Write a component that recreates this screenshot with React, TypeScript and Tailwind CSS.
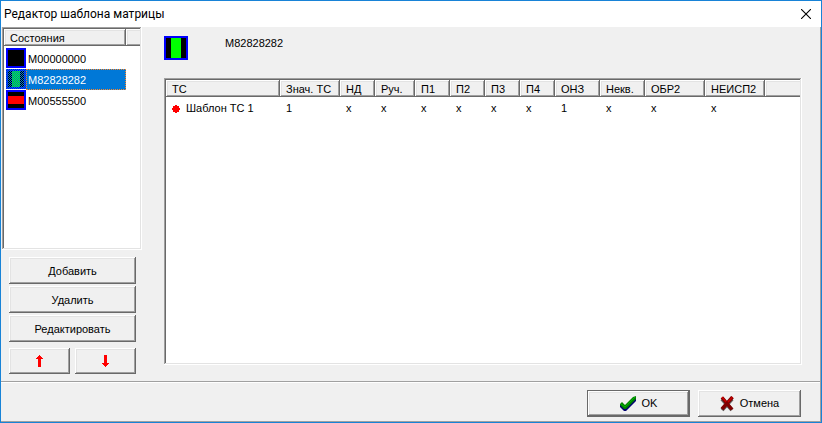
import React from "react";

const raised =
  "shadow-[inset_-1px_-1px_#696969,inset_1px_1px_#fff,inset_-2px_-2px_#a0a0a0,inset_2px_2px_#e3e3e3]";
const raisedOpen =
  "shadow-[inset_0_-1px_#696969,inset_1px_1px_#fff,inset_0_-2px_#a0a0a0,inset_2px_2px_#e3e3e3]";
const sunken =
  "p-[2px] bg-white shadow-[inset_-1px_-1px_#fff,inset_1px_1px_#a0a0a0,inset_-2px_-2px_#e3e3e3,inset_2px_2px_#696969]";

const states = [
  { name: "M00000000", kind: "black" },
  { name: "M82828282", kind: "green", selected: true },
  { name: "M00555500", kind: "red" },
];

const columns = [
  { title: "ТС", value: "Шаблон ТС 1", width: "w-[114px]" },
  { title: "Знач. ТС", value: "1", width: "w-[60px]" },
  { title: "НД", value: "x", width: "w-[35px]" },
  { title: "Руч.", value: "x", width: "w-[40px]" },
  { title: "П1", value: "x", width: "w-[35px]" },
  { title: "П2", value: "x", width: "w-[35px]" },
  { title: "П3", value: "x", width: "w-[35px]" },
  { title: "П4", value: "x", width: "w-[35px]" },
  { title: "ОНЗ", value: "1", width: "w-[45px]" },
  { title: "Некв.", value: "x", width: "w-[45px]" },
  { title: "ОБР2", value: "x", width: "w-[60px]" },
  { title: "НЕИСП2", value: "x", width: "w-[60px]" },
  { title: "", value: "", width: "" },
];

function StateIcon({ kind, selected }: { kind: string; selected?: boolean }) {
  return (
    <svg className="size-5 shrink-0" viewBox="0 0 20 20" shapeRendering="crispEdges" aria-hidden="true">
      <rect width="20" height="20" fill="#00f" />
      <rect x="2" y="2" width="16" height="16" fill="#000" />
      {kind === "green" && <rect x="6" y="2" width="8" height="16" fill="#0f0" />}
      {kind === "red" && <rect x="2" y="6" width="16" height="8" fill="#f00" />}
      {selected && (
        <>
          <pattern id="dither" width="2" height="2" patternUnits="userSpaceOnUse">
            <rect width="1" height="1" fill="#0078d7" />
            <rect x="1" y="1" width="1" height="1" fill="#0078d7" />
          </pattern>
          <rect width="20" height="20" fill="url(#dither)" />
        </>
      )}
    </svg>
  );
}

function Arrow({ down }: { down?: boolean }) {
  return (
    <svg className="h-3 w-[7px]" viewBox="0 0 7 12" shapeRendering="crispEdges" fill="#f00" aria-hidden="true">
      {down ? (
        <path d="M2 0h3v8h2v1h-1v1h-1v1h-1v1h-1v-1h-1v-1h-1v-1h-1v-1h2z" />
      ) : (
        <path d="M3 0h1v1h1v1h1v1h1v1h-2v8h-3v-8h-2v-1h1v-1h1v-1h1z" />
      )}
    </svg>
  );
}

function PushButton({ children, label, className = "" }: { children: React.ReactNode; label?: string; className?: string }) {
  return (
    <button aria-label={label} className={`flex items-center justify-center bg-[#f0f0f0] ${raised} ${className}`}>
      {children}
    </button>
  );
}

export default function App() {
  return (
    <div className="flex min-h-screen flex-col border border-[#1883d7] bg-[#f0f0f0] font-['Liberation_Sans',Arial,sans-serif] text-[11px] leading-[13px] text-black">
      <header className="flex h-[26px] items-center justify-between bg-white pr-[6px] pl-[3px]">
        <h1 className="font-[Roboto,'Open_Sans',sans-serif] text-[12px] leading-4">Редактор шаблона матрицы</h1>
        <button aria-label="Закрыть" className="p-1">
          <svg className="size-[10px]" viewBox="0 0 10 10" stroke="#000" strokeWidth="1.1" aria-hidden="true">
            <path d="M0 0L10 10M10 0L0 10" />
          </svg>
        </button>
      </header>

      <div className="flex grow flex-col border-r border-b border-[#a0a0a0]">
        <main className="flex grow pr-[18px] pb-[7px] pl-px">
          <section className="flex w-[140px] shrink-0 flex-col">
            <div className={`h-[223px] ${sunken}`}>
              <div className="flex h-[17px] bg-[#f0f0f0]">
                <div className={`flex w-[122px] items-center px-[6px] pt-px ${raised}`}>Состояния</div>
                <div className={`grow ${raisedOpen}`} />
              </div>
              <ul role="listbox" aria-label="Состояния" className="pt-[2px]">
                {states.map((s) => (
                  <li key={s.name} role="option" aria-selected={!!s.selected} className="flex h-[21px] pl-[2px]">
                    <StateIcon kind={s.kind} selected={s.selected} />
                    <span
                      className={`flex w-[100px] items-center border border-dotted pt-px pl-px ${
                        s.selected ? "border-[#ff8728] bg-[#0078d7] text-white" : "border-transparent"
                      }`}
                    >
                      {s.name}
                    </span>
                  </li>
                ))}
              </ul>
            </div>
            <div className="flex flex-col gap-[2px] pt-[7px] pr-[6px] pl-[7px]">
              <PushButton className="h-[27px] pt-px">Добавить</PushButton>
              <PushButton className="h-[27px] pt-px">Удалить</PushButton>
              <PushButton className="h-[27px] pt-px">Редактировать</PushButton>
              <div className="mt-1 grid grid-cols-2 gap-[5px]">
                <PushButton label="Вверх" className="h-[26px]">
                  <Arrow />
                </PushButton>
                <PushButton label="Вниз" className="h-[26px]">
                  <Arrow down />
                </PushButton>
              </div>
            </div>
          </section>

          <section className="flex grow flex-col pb-[9px] pl-[22px]">
            <div className="flex h-[51px] gap-[37px] pt-[9px]">
              <svg className="size-6" viewBox="0 0 24 24" shapeRendering="crispEdges" aria-hidden="true">
                <rect width="24" height="24" fill="#00f" />
                <rect x="2" y="2" width="20" height="20" fill="#000" />
                <rect x="7" y="2" width="10" height="20" fill="#0f0" />
              </svg>
              <span className="pt-px">M82828282</span>
            </div>
            <div className={`grow ${sunken}`}>
              <table className="w-full table-fixed border-collapse text-left">
                <thead>
                  <tr className="h-[17px] bg-[#f0f0f0]">
                    {columns.map((c) => (
                      <th
                        key={c.title}
                        className={`px-[6px] pt-[2px] pb-0 font-normal whitespace-nowrap ${c.width} ${c.title ? raised : raisedOpen}`}
                      >
                        {c.title}
                      </th>
                    ))}
                  </tr>
                </thead>
                <tbody>
                  <tr className="h-[21px]">
                    {columns.map((c, i) => (
                      <td key={c.title} className="px-[6px] pt-[2px] pb-0 whitespace-nowrap">
                        {i === 0 ? (
                          <span className="flex items-center gap-[6px]">
                            <svg className="size-2" viewBox="0 0 8 8" shapeRendering="crispEdges" fill="#f00" aria-hidden="true">
                              <path d="M3 0h2v1h2v2h1v2h-1v2h-2v1h-2v-1h-2v-2h-1v-2h1v-2h2z" />
                            </svg>
                            {c.value}
                          </span>
                        ) : (
                          c.value
                        )}
                      </td>
                    ))}
                  </tr>
                </tbody>
              </table>
            </div>
          </section>
        </main>

        <footer className="flex justify-end gap-2 border-t border-[#a0a0a0] pt-2 pr-[19px] pb-1 shadow-[inset_0_1px_#fff]">
          <button className={`flex h-[27px] w-[103px] items-center justify-center gap-[6px] border border-[#696969] ${raised}`}>
            <svg className="size-4" viewBox="0 0 16 16" fill="none" aria-hidden="true">
              <path d="M0 9L2 8L5 11L14 2L16 3V5L6 15H4L0 11Z" fill="#000070" />
              <path d="M0 8L2 6L5 9L13 1L16 0V3L6 13H4L0 9Z" fill="#008000" />
              <path d="M1 8L5 11L15 1" stroke="#00b800" strokeWidth="1" />
            </svg>
            OK
          </button>
          <PushButton className="h-[27px] w-[103px] gap-[6px]">
            <svg className="h-4 w-[14px]" viewBox="0 0 14 16" fill="none" aria-hidden="true">
              <path d="M2 3L12 14M12 3L2 14" stroke="#606060" strokeWidth="4" />
              <path d="M2 1.500L12 13.500M12.500 1L2 13" stroke="#800000" strokeWidth="3.500" />
              <path d="M2 1L6 6M12.500 1L8 6" stroke="#c80000" strokeWidth="1.500" />
            </svg>
            Отмена
          </PushButton>
        </footer>
      </div>
    </div>
  );
}
